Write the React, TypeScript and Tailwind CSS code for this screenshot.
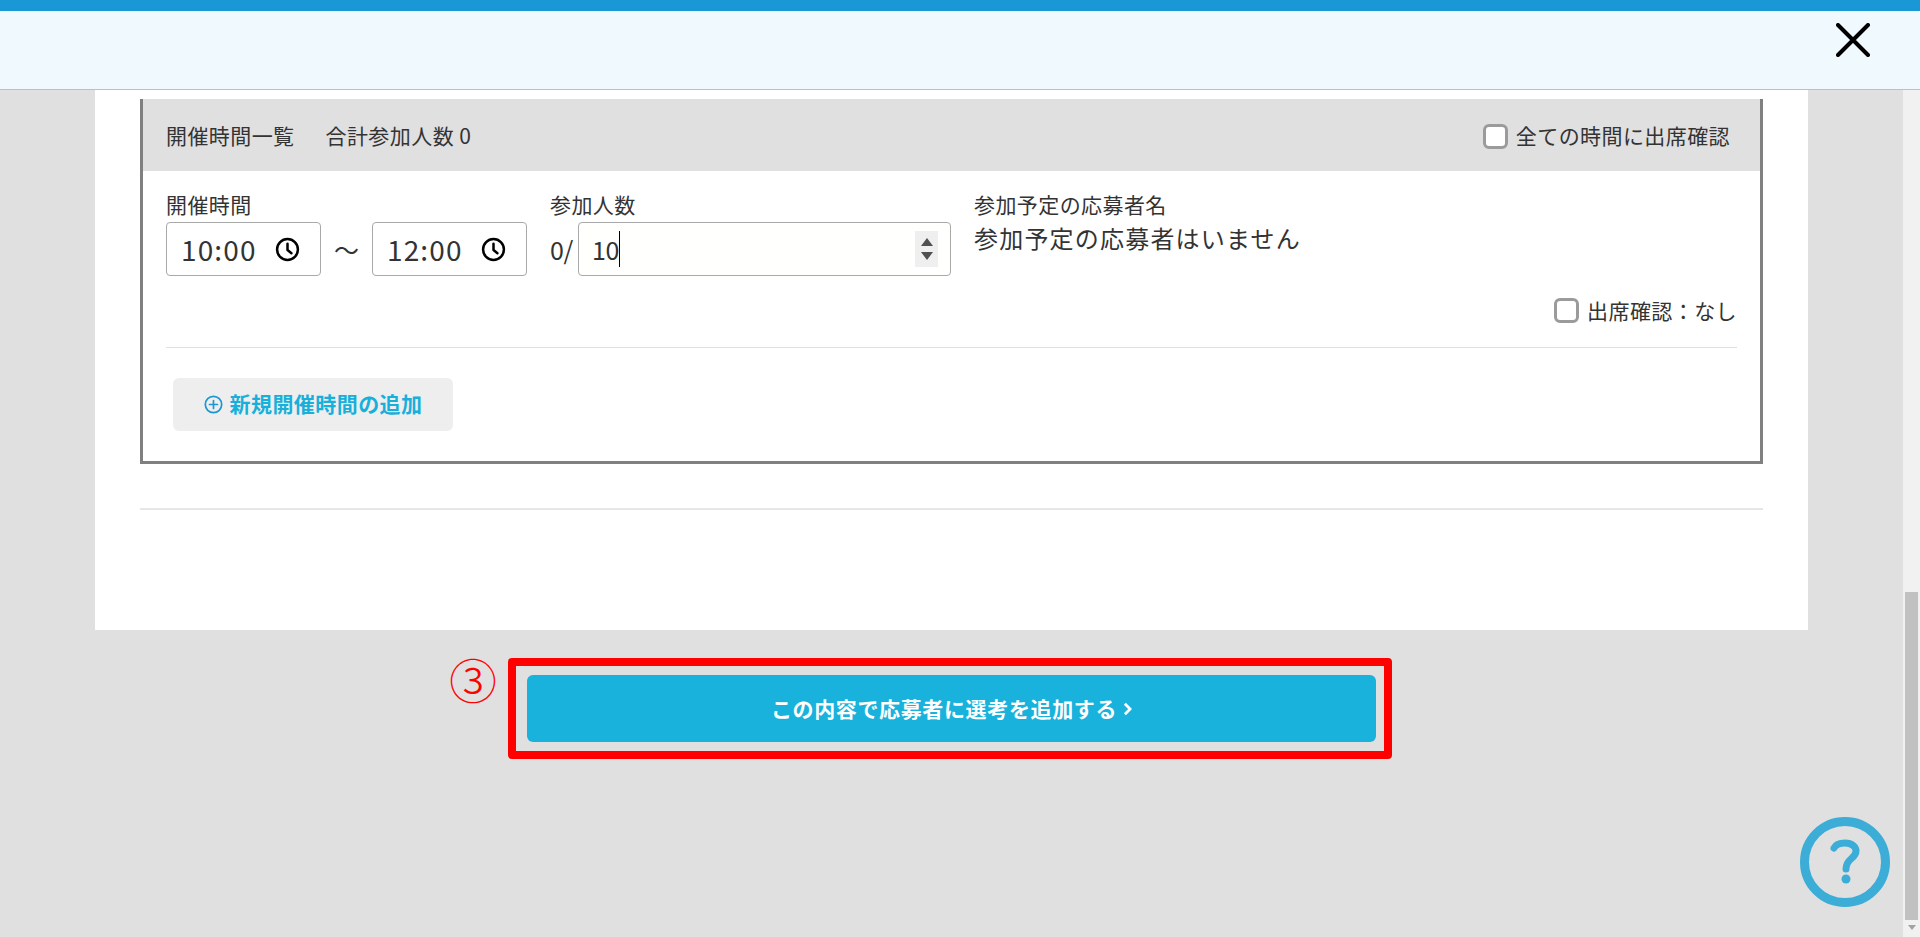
const TimeField = ({ value }: { value: string }) => {
  return (
    <div className="flex h-[54px] w-[155px] flex-none items-center justify-between rounded-[4px] border border-[#a9a9a9] bg-white pl-[14px] pr-[20px]">
      <span className="text-[28px] leading-none tracking-[0.04em] text-[#333]">{value}</span>
      <svg viewBox="0 0 24 24" className="h-[25px] w-[25px] flex-none" fill="none" stroke="#000" strokeWidth="2.4" strokeLinecap="round" strokeLinejoin="round">
        <circle cx="12" cy="12" r="10" />
        <path d="M12 6.5V12.5L15.8 15.5" />
      </svg>
    </div>
  );
};

const CheckBox = () => {
  return <span className="h-[25px] w-[25px] flex-none rounded-[6px] border-[3px] border-[#9b9b9b] bg-white" />;
};

export default function App() {
  return (
    <div className="flex h-[937px] w-full flex-col overflow-hidden bg-[#e0e0e0] font-['Noto_Sans_CJK_JP','Noto_Sans',sans-serif] text-[#333]">
      <div className="h-[11px] flex-none bg-[#1a98d5]" />
      <div className="flex h-[79px] flex-none items-center justify-end border-b border-[#b8c0d0] bg-[#f0f9fd] pb-[21px] pr-[50px]">
        <svg viewBox="0 0 34 34" className="h-[34px] w-[34px]" fill="none" stroke="#000" strokeWidth="4" strokeLinecap="round">
          <path d="M2 2L32 32M32 2L2 32" />
        </svg>
      </div>

      <div className="flex min-h-0 flex-1">
        <div className="min-w-0 flex-1">
          <div className="mx-[95px] h-[540px] bg-white pt-[9px]">
            <div className="ml-[45px] mr-[45px] border-x-[3px] border-b-[3px] border-[#808080]">
              <div className="flex h-[72px] items-center justify-between bg-[#e0e0e0] pl-[23px] pr-[30px] pt-[2px] text-[21px] tracking-[0.02em]">
                <div className="flex gap-[31px]">
                  <span>開催時間一覧</span>
                  <span>合計参加人数 0</span>
                </div>
                <label className="flex items-center gap-[8px]">
                  <CheckBox />
                  <span>全ての時間に出席確認</span>
                </label>
              </div>

              <div className="px-[23px]">
                <div className="flex pt-[20px]">
                  <div className="w-[384px] flex-none">
                    <div className="h-[31px] text-[21px] leading-[26px] tracking-[0.02em]">開催時間</div>
                    <div className="flex items-center">
                      <TimeField value="10:00" />
                      <span className="w-[51px] text-center text-[25px] leading-none">{"\u301C"}</span>
                      <TimeField value="12:00" />
                    </div>
                  </div>
                  <div className="w-[425px] flex-none">
                    <div className="h-[31px] text-[21px] leading-[26px] tracking-[0.02em]">参加人数</div>
                    <div className="flex items-center">
                      <span className="w-[28px] flex-none text-[25px] leading-none tracking-[-0.02em]">0/</span>
                      <div className="flex h-[54px] w-[373px] flex-none items-center justify-between rounded-[4px] border border-[#a9a9a9] bg-[#fffffd] pl-[13px] pr-[12px]">
                        <div className="flex items-center">
                          <span className="text-[25px] leading-none tracking-[-0.02em] text-[#333]">10</span>
                          <span className="h-[36px] w-px bg-black" />
                        </div>
                        <div className="flex h-[36px] w-[23px] flex-col items-center justify-center gap-[6px] bg-[#efefef]">
                          <span className="h-0 w-0 border-x-[6px] border-b-[8px] border-x-transparent border-b-[#505050]" />
                          <span className="h-0 w-0 border-x-[6px] border-t-[8px] border-x-transparent border-t-[#505050]" />
                        </div>
                      </div>
                    </div>
                  </div>
                  <div className="min-w-0 flex-1">
                    <div className="ml-[-1px] h-[31px] text-[21px] leading-[26px] tracking-[0.02em]">参加予定の応募者名</div>
                    <div className="ml-[-1px] text-[24px] leading-[32px] tracking-[0.05em]">参加予定の応募者はいません</div>
                  </div>
                </div>

                <label className="mt-[19px] flex items-center justify-end gap-[8px] text-[21px] tracking-[0.02em]">
                  <CheckBox />
                  <span>出席確認{"\uFF1A"}なし</span>
                </label>

                <div className="mt-[20px] h-px bg-[#e0e0e0]" />
              </div>

              <div className="pb-[30px] pl-[30px] pt-[30px]">
                <button className="flex h-[53px] w-[280px] items-center justify-center gap-[7px] rounded-[6px] bg-[#eeeeee] text-[21px] font-bold tracking-[0.02em] text-[#18b0da]">
                  <svg viewBox="0 0 20 20" className="h-[19px] w-[19px] flex-none" fill="none" stroke="#1a98d5" strokeWidth="1.8" strokeLinecap="round">
                    <circle cx="10" cy="10" r="8.6" />
                    <path d="M10 5.8V14.2M5.8 10H14.2" />
                  </svg>
                  <span>新規開催時間の追加</span>
                </button>
              </div>
            </div>

            <div className="ml-[45px] mr-[45px] mt-[44px] h-[2px] bg-[#e6e6e6]" />
          </div>

          <div className="mt-[28px] flex items-start pl-[449px]">
            <span className="w-[59px] flex-none text-[48px] font-light leading-[40px] text-[#ff0000]">③</span>
            <div className="w-[884px] flex-none rounded-[4px] border-[8px] border-[#ff0000] pb-[9px] pl-[11px] pr-[8px] pt-[9px]">
              <button className="flex h-[67px] w-full items-center justify-center gap-[6px] rounded-[6px] bg-[#18b2dc] text-[21px] font-bold tracking-[0.03em] text-white">
                <span>この内容で応募者に選考を追加する</span>
                <svg viewBox="0 0 10 16" className="h-[14px] w-[9px]" fill="none" stroke="#fff" strokeWidth="3.2">
                  <path d="M2 2L8 8L2 14" />
                </svg>
              </button>
            </div>
          </div>
        </div>

        <div className="flex w-[17px] flex-none flex-col items-center bg-[#f1f1f1]">
          <div className="h-[502px] w-full" />
          <div className="h-[328px] w-[13px] bg-[#c1c1c1]" />
          <span className="mt-[5px] h-0 w-0 border-x-[4px] border-t-[5px] border-x-transparent border-t-[#a3a3a3]" />
        </div>
      </div>

      <svg viewBox="0 0 90 90" className="absolute left-[1800px] top-[817px] h-[90px] w-[90px]" fill="none" stroke="#3badd6">
        <circle cx="45" cy="45" r="40.5" strokeWidth="9" />
        <path d="M34 31C36 27 41 26 45 26C52 26 56 30 56 34C56 42 46 41 46 52" strokeWidth="7" strokeLinecap="round" />
        <circle cx="46" cy="62" r="4.5" fill="#3badd6" stroke="none" />
      </svg>
    </div>
  );
}
